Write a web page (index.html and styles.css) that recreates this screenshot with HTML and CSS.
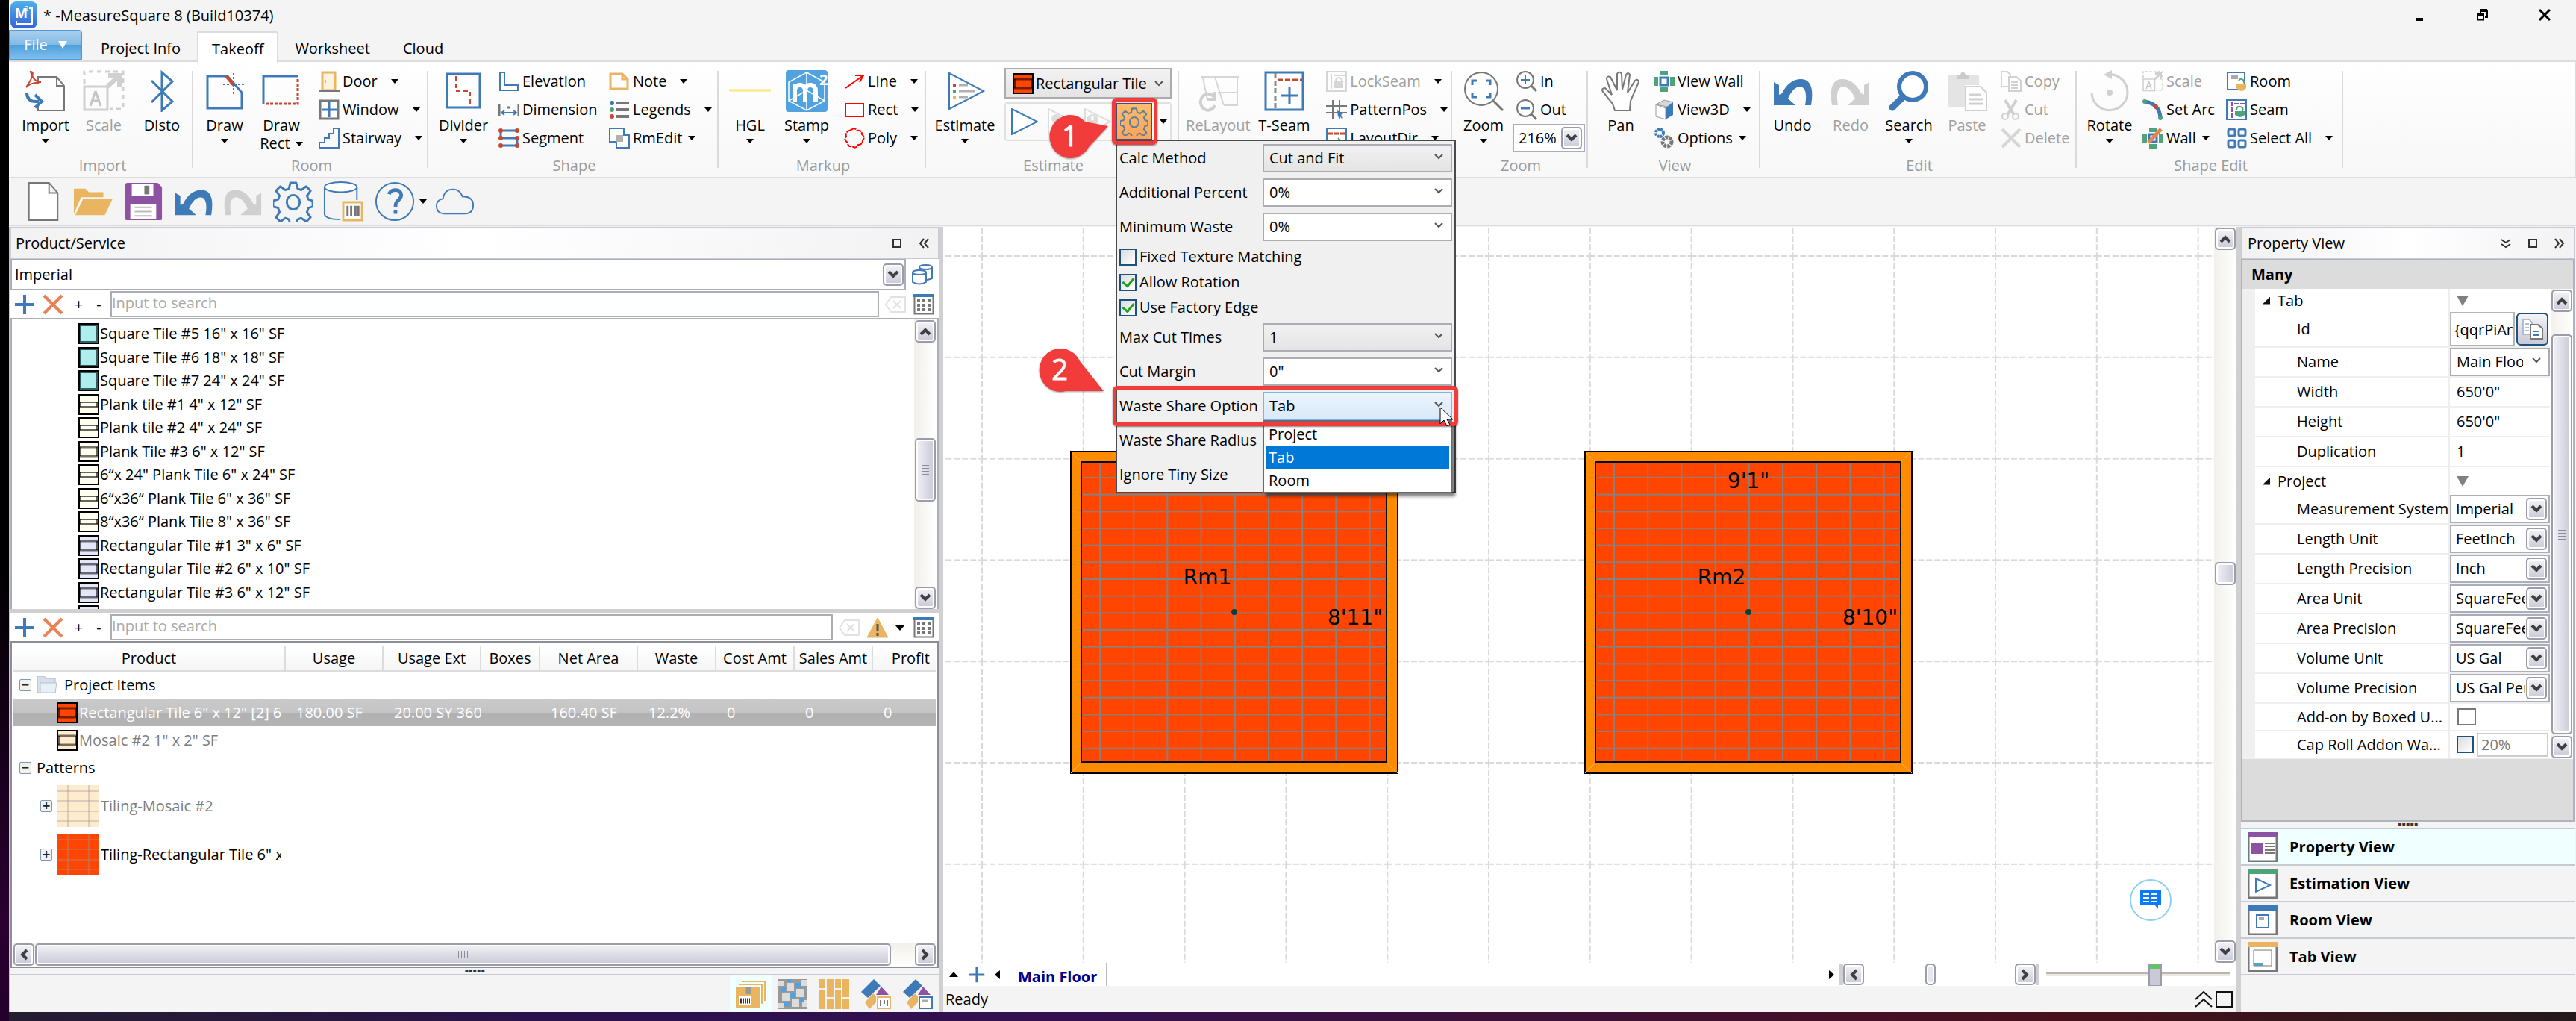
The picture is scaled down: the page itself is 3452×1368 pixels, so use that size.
FILE: index.html
```html
<!DOCTYPE html>
<html lang="en">
<head>
<meta charset="utf-8">
<title>* -MeasureSquare 8 (Build10374)</title>
<link rel="stylesheet" href="styles.css">
</head>
<body>
<svg class="defs" aria-hidden="true">
  <symbol id="chev" viewBox="0 0 16 12"><path d="M2 2l6 6 6-6" fill="none" stroke="#404040" stroke-width="4"/></symbol>
  <symbol id="thin" viewBox="0 0 12 10"><path d="M1 2l5 5 5-5" fill="none" stroke="#555" stroke-width="2"/></symbol>
  <symbol id="plus" viewBox="0 0 28 28"><path d="M14 1v26M1 14h26" stroke="#3e7ab8" stroke-width="4"/></symbol>
  <symbol id="cross" viewBox="0 0 28 28"><path d="M2 2l24 24M26 2L2 26" stroke="#e88355" stroke-width="4"/></symbol>
  <symbol id="grid" viewBox="0 0 28 28"><path d="M1.500 3v23.500h25V3" fill="#fff" stroke="#777" stroke-width="2"/><path d="M0 2h28" stroke="#3e7ab8" stroke-width="4"/><path d="M5 9h18M5 15h18M5 21h18" stroke="#777" stroke-width="4" stroke-dasharray="4 3"/></symbol>
  <symbol id="clear" viewBox="0 0 28 28"><path d="M1 14L8 4h19v20H8zM11 9l10 10M21 9L11 19" fill="none" stroke="#e2e2e2" stroke-width="2"/></symbol>
  <symbol id="gear" viewBox="0 0 56 56"><path d="M24 2h8l2 8 5 2 7-5 6 6-5 7 2 5 6 2v8l-6 2-2 6 5 7-6 6-7-5-5 2-2 7h-8l-2-7-5-2-7 5-6-6 5-7-2-6-7-2v-8l7-2 2-5-5-7 6-6 7 5 5-2z" fill="none" stroke="currentColor" stroke-width="3" stroke-linejoin="round"/><ellipse cx="28" cy="29" rx="9" ry="10" fill="none" stroke="currentColor" stroke-width="3"/></symbol>
  <symbol id="undo" viewBox="0 0 56 56"><path d="M3 16v31h29L22 38Q29 22 39 22q10 2 6 25h8Q59 11 38 12 23 13 14 31l-4 2V20z" fill="currentColor"/></symbol>
  <symbol id="redo" viewBox="0 0 56 56"><path d="M53 16v31H24l10-9Q27 22 17 22q-10 2-6 25H3Q-3 11 18 12q15 1 24 19l4 2V20z" fill="currentColor"/></symbol>
  <symbol id="scaleBig" viewBox="0 0 56 56"><path d="M2 18V2h52v50H36" fill="none" stroke="#d0d0d0" stroke-width="3" stroke-dasharray="6 5"/><path d="M2 22h31v31H2z" fill="none" stroke="#d0d0d0" stroke-width="3"/><path d="M33 22L48 8M34 7h15v16" fill="none" stroke="#d0d0d0" stroke-width="6"/><path d="M17 28l-7 20M17 28l7 20M12 41h11" fill="none" stroke="#c6c6c6" stroke-width="3"/></symbol>
  <symbol id="swBand" viewBox="0 0 28 28"><rect x="1" y="1" width="26" height="26" fill="currentColor" stroke="#000" stroke-width="2"/><path d="M2 8h24M2 20h24" stroke="#000" stroke-opacity=".55" stroke-width="3"/><path d="M3 8v12M25 8v12" stroke="#000" stroke-opacity=".6" stroke-width="2"/></symbol>
  <symbol id="swThin" viewBox="0 0 28 28"><rect x="1" y="1" width="26" height="26" fill="currentColor" stroke="#000" stroke-width="2"/><path d="M2 11h24M2 17h24" stroke="#000" stroke-opacity=".6" stroke-width="2"/><path d="M3 11v6M25 11v6" stroke="#000" stroke-opacity=".6" stroke-width="2"/></symbol>
  <symbol id="swSq" viewBox="0 0 28 28"><rect x="1" y="1" width="26" height="26" fill="currentColor" stroke="#000" stroke-width="2"/><rect x="3" y="3" width="22" height="22" fill="none" stroke="#2f5f5f" stroke-width="2"/></symbol>
  <symbol id="wall" viewBox="0 0 28 28"><path d="M9 0h10v6H9zM9 22h10v6H9zM0 8h6v12H0zM22 8h6v12h-6z" fill="#4ea27c"/><rect x="9" y="9" width="10" height="10" fill="#fff" stroke="#3e7ab8" stroke-width="3"/></symbol>
</svg>

<div class="app">
  <header class="titlebar">
    <svg class="logo" viewBox="0 0 36 36"><defs><linearGradient id="lg" x2="0" y2="1"><stop stop-color="#4fb0ea"/><stop offset="1" stop-color="#3463dc"/></linearGradient></defs><rect width="36" height="36" rx="8" fill="url(#lg)"/><path d="M8 26v4h21V9h-4" fill="none" stroke="#fff" stroke-width="2"/><text x="6" y="22" class="logo-m">M</text><text x="19" y="13" class="logo-2">2</text></svg>
    <h1>* -MeasureSquare 8 (Build10374)</h1>
    <div class="winbtns">
      <button aria-label="Minimize"><svg viewBox="0 0 20 20"><path d="M5 16h10" stroke="#000" stroke-width="4"/></svg></button>
      <button aria-label="Restore"><svg viewBox="0 0 20 20"><path d="M8 7V4h9v9h-3M4 8.500h8v8H4z" fill="none" stroke="#000" stroke-width="2"/><path d="M7 4h10M3 9h10" stroke="#000" stroke-width="4"/></svg></button>
      <button aria-label="Close"><svg viewBox="0 0 20 20"><path d="M3 3l14 14M17 3L3 17" stroke="#000" stroke-width="3"/></svg></button>
    </div>
  </header>

  <nav class="tabs">
    <button class="file">File <svg viewBox="0 0 12 10"><path d="M0 0h12L6 10z" fill="#fff"/></svg></button>
    <button class="tab">Project Info</button>
    <button class="tab active">Takeoff</button>
    <button class="tab">Worksheet</button>
    <button class="tab">Cloud</button>
  </nav>

  <section class="ribbon">
    <div class="group g-import"><div class="tools">
      <button class="big"><svg viewBox="0 0 56 56"><path d="M18 18V9h25l10 12v33H18v-9M43 9v12h10" fill="none" stroke="#777" stroke-width="2"/><path d="M8 2c6 0 2 9-6 21 4-4 8-6 20-7-8 0-13-8-14-14z" fill="none" stroke="#c9472e" stroke-width="2"/><path d="M3 30q0 12 12 12h4M14 33l9 9-9 8" fill="none" stroke="#3e7ab8" stroke-width="4"/></svg><span>Import</span><i class="dd"></i></button>
      <button class="big off"><svg><use href="#scaleBig"/></svg><span>Scale</span></button>
      <button class="big"><svg viewBox="0 0 56 56"><path d="M14 14l28 28-14 12V3l14 12-28 28" fill="none" stroke="#3e7ab8" stroke-width="3"/></svg><span>Disto</span></button>
    </div><h2>Import</h2></div>

    <div class="group g-room"><div class="tools">
      <button class="big"><svg viewBox="0 0 56 56"><path d="M32 8H5v43h46V30z" fill="none" stroke="#3e7ab8" stroke-width="3"/><path d="M40 4v30M26 19h30" stroke="#3e7ab8" stroke-width="2" stroke-dasharray="3 2"/><path d="M30 8l10 12" stroke="#c9472e" stroke-width="4"/></svg><span>Draw</span><i class="dd"></i></button>
      <button class="big"><svg viewBox="0 0 56 56"><path d="M4 46V8h47" fill="none" stroke="#3e7ab8" stroke-width="3"/><path d="M50 12v33H6" fill="none" stroke="#c9472e" stroke-width="3" stroke-dasharray="4 2"/></svg><span>Draw</span><span>Rect <i class="dd in"></i></span></button>
      <div class="col">
        <button class="small wide"><svg viewBox="0 0 28 28"><path d="M5 2h17v24H5z" fill="#fdf3e0" stroke="#eab561" stroke-width="3"/><path d="M9 12v4" stroke="#eab561" stroke-width="2"/><path d="M0 27h28" stroke="#777" stroke-width="3"/></svg>Door<i class="dd"></i></button>
        <button class="small wide"><svg viewBox="0 0 28 28"><path d="M2 2h24v24H2z" fill="#fff" stroke="#777" stroke-width="3"/><path d="M14 4v20M4 14h20" stroke="#3e7ab8" stroke-width="3"/></svg>Window<i class="dd"></i></button>
        <button class="small wide"><svg viewBox="0 0 28 28"><path d="M1 27v-7h7v-6h6V8h6V1h7v26z" fill="none" stroke="#3e7ab8" stroke-width="2"/></svg>Stairway<i class="dd"></i></button>
      </div>
    </div><h2>Room</h2></div>

    <div class="group g-shape"><div class="tools">
      <button class="big"><svg viewBox="0 0 56 56"><path d="M6 5h44v45H6z" fill="#fff" stroke="#3e7ab8" stroke-width="3"/><path d="M18 8v20h19v20" fill="none" stroke="#c9472e" stroke-width="2" stroke-dasharray="6 4"/></svg><span>Divider</span><i class="dd"></i></button>
      <div class="col">
        <button class="small"><svg viewBox="0 0 28 28"><path d="M2 2h6v17h18v7H2z" fill="#fff" stroke="#3e7ab8" stroke-width="2"/></svg>Elevation</button>
        <button class="small"><svg viewBox="0 0 28 28"><path d="M1 6v16M27 6v16M11 11h5" stroke="#777" stroke-width="3"/><path d="M4 18h20M8 15l-4 3 4 3M20 15l4 3-4 3" fill="none" stroke="#3e7ab8" stroke-width="2"/></svg>Dimension</button>
        <button class="small"><svg viewBox="0 0 28 28"><path d="M25 4H3v10h22v10H3" fill="none" stroke="#3e7ab8" stroke-width="3"/><g fill="#c9472e"><circle cx="3" cy="4" r="3"/><circle cx="25" cy="4" r="3"/><circle cx="3" cy="14" r="3"/><circle cx="25" cy="14" r="3"/><circle cx="3" cy="24" r="3"/><circle cx="25" cy="24" r="3"/></g></svg>Segment</button>
      </div>
      <div class="col">
        <button class="small wide"><svg viewBox="0 0 28 28"><path d="M2 4h16l7 7v13H2zM18 4v7h7" fill="#fff" stroke="#eab561" stroke-width="3"/></svg>Note<i class="dd"></i></button>
        <button class="small wide"><svg viewBox="0 0 28 28"><circle cx="4" cy="5" r="3" fill="#3e7ab8"/><circle cx="4" cy="14" r="3" fill="#4ea27c"/><circle cx="4" cy="23" r="3" fill="#c9472e"/><path d="M9 5h18M9 14h18M9 23h18" stroke="#777" stroke-width="4"/></svg>Legends<i class="dd"></i></button>
        <button class="small"><svg viewBox="0 0 28 28"><path d="M1 1h19v9h7v17H10v-8H1z" fill="#fff" stroke="#3e7ab8" stroke-width="2"/><path d="M10 10h9v9h-9z" fill="#b0b0b0"/></svg>RmEdit<i class="dd"></i></button>
      </div>
    </div><h2>Shape</h2></div>

    <div class="group g-markup"><div class="tools">
      <button class="big"><svg viewBox="0 0 56 56"><path d="M0 27h56" stroke="#ffe678" stroke-width="3"/></svg><span>HGL</span><i class="dd"></i></button>
      <button class="big"><svg viewBox="0 0 56 56"><rect width="56" height="56" rx="4" fill="#51a2df"/><path d="M28 3l24 13v25L28 54 4 41V16zM4 41l24-14 24 14M28 3v50" fill="none" stroke="#fff" stroke-width="1.500"/><path d="M12 42V18M12 27q1-8 8-7 6 1 6 8v14M26 27q1-8 8-7 6 1 6 8v14" fill="none" stroke="#fff" stroke-width="6"/><text x="45" y="20" class="stamp2">2</text></svg><span>Stamp</span><i class="dd"></i></button>
      <div class="col">
        <button class="small wide"><svg viewBox="0 0 28 28"><path d="M2 23L26 6M15 6h11l-5 9" fill="none" stroke="red" stroke-width="2"/></svg>Line<i class="dd"></i></button>
        <button class="small wide"><svg viewBox="0 0 28 28"><path d="M2 6h24v17H2z" fill="none" stroke="red" stroke-width="2"/></svg>Rect<i class="dd"></i></button>
        <button class="small wide"><svg viewBox="0 0 28 28"><path d="M10 3q4-4 8 1 6-1 6 5 5 4 1 8 0 6-6 6-3 6-8 2-6 1-6-5-6-4-2-8-2-7 7-9z" fill="none" stroke="red" stroke-width="2" stroke-dasharray="7 1"/></svg>Poly<i class="dd"></i></button>
      </div>
    </div><h2>Markup</h2></div>

    <div class="group g-est"><div class="tools">
      <button class="big"><svg viewBox="0 0 56 56"><path d="M7 4v48l46-24z" fill="#fff" stroke="#3e7ab8" stroke-width="2"/><path d="M20 20h12M20 28h22M20 36h12" stroke="#b0b0b0" stroke-width="3"/><path d="M12 20h4" stroke="#c9472e" stroke-width="4"/><path d="M12 28h4" stroke="#4ea27c" stroke-width="4"/><path d="M12 36h4" stroke="#eab561" stroke-width="4"/></svg><span>Estimate</span><i class="dd"></i></button>
      <div class="stack">
        <button class="tilepick"><svg class="sw red"><use href="#swBand"/></svg><span>Rectangular Tile</span><svg class="thin"><use href="#thin"/></svg></button>
        <div class="runbox">
          <button aria-label="Run"><svg viewBox="0 0 36 36"><path d="M1 1v34l34-17z" fill="#fff" stroke="#3e7ab8" stroke-width="2"/></svg></button>
          <button aria-label="Run selected"><svg viewBox="0 0 36 36"><path d="M1 1v34l34-17z" fill="#fff" stroke="#ddd" stroke-width="2"/><circle cx="11" cy="14" r="6" fill="#ddd"/></svg></button>
          <button aria-label="Stop"><svg viewBox="0 0 36 36"><path d="M1 1v34l34-17z" fill="#fff" stroke="#ddd" stroke-width="2"/><circle cx="11" cy="16" r="8" fill="#ddd"/><path d="M11 11v5" stroke="#fff" stroke-width="3"/></svg></button>
          <div class="settings">
            <button class="gearbtn" aria-label="Settings"><svg><use href="#gear"/></svg></button>
            <form class="popup">
              <div class="prow"><label for="calc">Calc Method</label><span class="combo grey"><select id="calc"><option>Cut and Fit</option></select><svg class="thin"><use href="#thin"/></svg></span></div>
              <div class="prow"><label for="addp">Additional Percent</label><span class="combo"><select id="addp"><option>0%</option></select><svg class="thin"><use href="#thin"/></svg></span></div>
              <div class="prow"><label for="minw">Minimum Waste</label><span class="combo"><select id="minw"><option>0%</option></select><svg class="thin"><use href="#thin"/></svg></span></div>
              <label class="check"><input type="checkbox">Fixed Texture Matching</label>
              <label class="check"><input type="checkbox" checked>Allow Rotation</label>
              <label class="check"><input type="checkbox" checked>Use Factory Edge</label>
              <div class="prow"><label for="maxc">Max Cut Times</label><span class="combo grey"><select id="maxc"><option>1</option></select><svg class="thin"><use href="#thin"/></svg></span></div>
              <div class="prow"><label for="cutm">Cut Margin</label><span class="combo"><select id="cutm"><option>0"</option></select><svg class="thin"><use href="#thin"/></svg></span></div>
              <div class="prow"><label for="wso">Waste Share Option</label><span class="combo hot"><select id="wso"><option>Tab</option></select><svg class="thin"><use href="#thin"/></svg>
                <ul class="list" role="listbox"><li role="option">Project</li><li role="option" aria-selected="true" class="sel">Tab</li><li role="option">Room</li></ul></span></div>
              <div class="prow"><label>Waste Share Radius</label></div>
              <div class="prow"><label>Ignore Tiny Size</label></div>
            </form>
            <div class="frame f1"></div>
            <div class="frame f2"></div>
            <svg class="marker m1" viewBox="0 0 80 60"><path d="M29 1a28 29 0 1 0 25 43L80 16 49 10A28 29 0 0 0 29 1z" fill="#f23c3c"/><text x="29" y="43">1</text></svg>
            <svg class="marker m2" viewBox="0 0 92 60"><path d="M29 1a28 29 0 1 0 8 57H88L56 18A28 29 0 0 0 29 1z" fill="#f23c3c"/><text x="29" y="43">2</text></svg>
            <svg class="cursor" viewBox="0 0 20 26"><path d="M1 1v22l5-5 4 8 4-2-4-7h8z" fill="#fff" stroke="#000"/></svg>
          </div>
          <i class="dd"></i>
        </div>
      </div>
    </div><h2>Estimate</h2></div>

    <div class="group g-layout"><div class="tools">
      <button class="big off"><svg viewBox="0 0 56 56"><path d="M6 9h50M24 9l12 38M36 47h18V9M28 30h26M8 10l6 30" fill="none" stroke="#d6d6d6" stroke-width="2"/><path d="M22 35a10 11 0 1 0 2 12M24 29v10H14" fill="none" stroke="#d0d0d0" stroke-width="4"/></svg><span>ReLayout</span></button>
      <button class="big"><svg viewBox="0 0 56 56"><path d="M3 3h50v50H3z" fill="#fff" stroke="#3e7ab8" stroke-width="3"/><path d="M16 4v48" stroke="#888" stroke-width="3" stroke-dasharray="7 3"/><path d="M19 13h33" stroke="#c9472e" stroke-width="3" stroke-dasharray="7 3"/><path d="M35 22v24M23 34h24" stroke="#3e7ab8" stroke-width="3"/></svg><span>T-Seam</span></button>
      <div class="col">
        <button class="small off wide"><svg viewBox="0 0 28 28"><path d="M1 1h26v26H1zM7 4v20M11 6h14" fill="none" stroke="#d6d6d6" stroke-width="2"/><path d="M11 14h12v9H11z" fill="#d6d6d6"/><path d="M13 14q0-5 4-5t4 5" fill="none" stroke="#d6d6d6" stroke-width="2"/></svg>LockSeam<i class="dd"></i></button>
        <button class="small wide"><svg viewBox="0 0 28 28"><path d="M9 1v26M18 1v26M0 9h28M0 18h28" stroke="#777" stroke-width="2"/><path d="M15 15l8 4-3 2 3 4-2 1-3-4-2 2z" fill="#3e7ab8"/></svg>PatternPos<i class="dd"></i></button>
        <button class="small wide"><svg viewBox="0 0 28 28"><path d="M1 1h26v26H1z" fill="#fff" stroke="#3e7ab8" stroke-width="2"/><path d="M3 8h22" stroke="#c9472e" stroke-width="3" stroke-dasharray="6 2"/><path d="M16 14l3 3-3 3" stroke="#4ea27c" fill="none" stroke-width="2"/></svg>LayoutDir<i class="dd"></i></button>
      </div>
    </div></div>

    <div class="group g-zoom"><div class="tools">
      <button class="big"><svg viewBox="0 0 56 56"><circle cx="25" cy="25" r="22" fill="#fff" stroke="#777" stroke-width="2"/><path d="M41 41l13 13" stroke="#777" stroke-width="3"/><path d="M13 20v-6h6M31 14h6v6M37 30v6h-6M19 36h-6v-6" fill="none" stroke="#3e7ab8" stroke-width="3"/></svg><span>Zoom</span><i class="dd"></i></button>
      <div class="col tight">
        <button class="small"><svg viewBox="0 0 28 28"><circle cx="12" cy="12" r="11" fill="#fff" stroke="#777" stroke-width="2"/><path d="M20 20l7 7" stroke="#777" stroke-width="3"/><path d="M12 6v12M6 12h12" stroke="#3e7ab8" stroke-width="2"/></svg>In</button>
        <button class="small"><svg viewBox="0 0 28 28"><circle cx="12" cy="12" r="11" fill="#fff" stroke="#777" stroke-width="2"/><path d="M20 20l7 7" stroke="#777" stroke-width="3"/><path d="M6 12h12" stroke="#3e7ab8" stroke-width="3"/></svg>Out</button>
        <span class="xcombo zoomsel"><select aria-label="Zoom level"><option>216%</option></select><b class="xb"><svg><use href="#chev"/></svg></b></span>
      </div>
    </div><h2>Zoom</h2></div>

    <div class="group g-view"><div class="tools">
      <button class="big"><svg viewBox="0 0 56 56"><path d="M20 54l-3-9L4 29q-3-5 3-5l9 9L9 12q0-5 5-3l9 18V5q3-5 6 0l1 21 5-20q3-4 5 0l-3 24 10-16q4-3 5 2L41 41l-1 13z" fill="#fff" stroke="#777" stroke-width="2"/></svg><span>Pan</span></button>
      <div class="col tight">
        <button class="small"><svg><use href="#wall"/></svg>View Wall</button>
        <button class="small wide"><svg viewBox="0 0 28 28"><path d="M3 7l11-6 12 3-8 6z" fill="#d5d9dc" stroke="#999"/><path d="M3 7l13 5v15L3 23z" fill="#fff" stroke="#999"/><path d="M16 12l10-8v17l-10 6z" fill="#3e7ab8"/></svg>View3D<i class="dd"></i></button>
        <button class="small"><svg viewBox="0 0 28 28"><circle cx="8" cy="7" r="5" fill="none" stroke="#3e7ab8" stroke-width="4" stroke-dasharray="3 1"/><circle cx="18" cy="19" r="6" fill="none" stroke="#777" stroke-width="5" stroke-dasharray="4 1"/></svg>Options<i class="dd"></i></button>
      </div>
    </div><h2>View</h2></div>

    <div class="group g-edit"><div class="tools">
      <button class="big blue"><svg><use href="#undo"/></svg><span>Undo</span></button>
      <button class="big off grey"><svg><use href="#redo"/></svg><span>Redo</span></button>
      <button class="big"><svg viewBox="0 0 56 56"><circle cx="33" cy="22" r="18" fill="#fff" stroke="#3e7ab8" stroke-width="6"/><path d="M20 36L6 50" stroke="#3e7ab8" stroke-width="9" stroke-linecap="round"/></svg><span>Search</span><i class="dd"></i></button>
      <button class="big off"><svg viewBox="0 0 56 56"><path d="M2 6h42v14H25v30H2z" fill="#e4e4e4"/><path d="M14 6h5q3-8 7 0h5v6H14z" fill="#ccc"/><path d="M26 22h20l8 8v24H26z" fill="#fff" stroke="#d0d0d0" stroke-width="2"/><path d="M31 33h16M31 39h18M31 45h18" stroke="#d0d0d0" stroke-width="3"/></svg><span>Paste</span></button>
      <div class="col tight">
        <button class="small off"><svg viewBox="0 0 28 28"><path d="M1 1h8l4 4v16H1z" fill="none" stroke="#d6d6d6" stroke-width="2"/><path d="M11 8h10l6 5v14H11zM14 15h9M14 19h9M14 23h9" fill="#fff" stroke="#d0d0d0" stroke-width="2"/></svg>Copy</button>
        <button class="small off"><svg viewBox="0 0 28 28"><path d="M6 1l12 20M21 1L9 21" stroke="#d0d0d0" stroke-width="4"/><circle cx="6" cy="23" r="4" fill="none" stroke="#d0d0d0" stroke-width="2"/><circle cx="20" cy="23" r="4" fill="none" stroke="#d0d0d0" stroke-width="2"/></svg>Cut</button>
        <button class="small off"><svg viewBox="0 0 28 28"><path d="M2 2l24 24M26 2L2 26" stroke="#d6d6d6" stroke-width="4"/></svg>Delete</button>
      </div>
    </div><h2>Edit</h2></div>

    <div class="group g-sedit"><div class="tools">
      <button class="big"><svg viewBox="0 0 56 56"><path d="M4 30a24 24 0 1 0 20-24" fill="none" stroke="#d0d0d0" stroke-width="3"/><path d="M20 6L31 0v12z" fill="#d0d0d0"/><circle cx="28" cy="30" r="4" fill="#d0d0d0"/></svg><span>Rotate</span><i class="dd"></i></button>
      <div class="col tight c112">
        <button class="small off"><svg><use href="#scaleBig"/></svg>Scale</button>
        <button class="small"><svg viewBox="0 0 28 28"><path d="M3 3Q23 6 24 25" fill="none" stroke="#3e7ab8" stroke-width="5"/><g fill="#4ea27c"><circle cx="3" cy="3" r="3"/><circle cx="24" cy="25" r="3"/></g><circle cx="18" cy="10" r="3" fill="#c9472e"/></svg>Set Arc</button>
        <button class="small"><svg viewBox="0 0 28 28"><use href="#wall"/><path d="M8 20L25 2" stroke="#e88355" stroke-width="5"/></svg>Wall<i class="dd"></i></button>
      </div>
      <div class="col tight">
        <button class="small"><svg viewBox="0 0 28 28"><path d="M2 2h23v23H2z" fill="#fff" stroke="#3e7ab8" stroke-width="2"/><path d="M7 6h9v5H7z" fill="#aaa"/><path d="M17 14q1-5 6-2l2 6" fill="none" stroke="#4ea27c" stroke-width="2"/><path d="M14 18h13v5q-6 8-13 0z" fill="#eab561"/></svg>Room</button>
        <button class="small"><svg viewBox="0 0 28 28"><path d="M1 1h26v26H1z" fill="#fff" stroke="#3e7ab8" stroke-width="2"/><path d="M8 3v22M11 6h14" stroke="#8d52a1" stroke-width="2" stroke-dasharray="6 2"/><path d="M14 15q0-6 5-5t3 6" fill="none" stroke="#4ea27c" stroke-width="2"/><path d="M12 16h13v5q-6 6-13 0z" fill="#4ea27c"/></svg>Seam</button>
        <button class="small wide"><svg viewBox="0 0 28 28"><g fill="#fff" stroke="#3e7ab8" stroke-width="3"><rect x="3" y="2" width="9" height="9" rx="2"/><rect x="17" y="2" width="9" height="9" rx="2"/><rect x="3" y="17" width="9" height="9" rx="2"/><rect x="17" y="17" width="9" height="9" rx="2"/></g></svg>Select All<i class="dd"></i></button>
      </div>
    </div><h2>Shape Edit</h2></div>
  </section>

  <div class="quick">
    <button aria-label="New"><svg viewBox="0 0 56 56"><path d="M8 2h28l12 14v38H8zM36 2v14h12" fill="#fff" stroke="#777" stroke-width="2"/></svg></button>
    <button aria-label="Open"><svg viewBox="0 0 56 56"><path d="M1 45V10h16l5 5h20v7H11z" fill="#eab561"/><path d="M14 24h41L44 47H3z" fill="#eab561"/></svg></button>
    <button aria-label="Save"><svg viewBox="0 0 56 56"><path d="M6 2h42l6 6v44q0 2-2 2H5q-2 0-2-2V5q0-3 3-3z" fill="#8d52a1"/><path d="M12 4h30v16H12zM10 31h36v21H10z" fill="#fff"/><path d="M33 6v12" stroke="#777" stroke-width="7"/><path d="M16 36h24M16 42h24M16 48h24" stroke="#bbb" stroke-width="2"/></svg></button>
    <button aria-label="Undo" class="blue"><svg><use href="#undo"/></svg></button>
    <button aria-label="Redo" class="grey"><svg><use href="#redo"/></svg></button>
    <button aria-label="Settings" class="blue"><svg><use href="#gear"/></svg></button>
    <button aria-label="Database"><svg viewBox="0 0 56 56"><path d="M2 8v38q2 7 22 7M47 8v18" fill="none" stroke="#3e7ab8" stroke-width="2"/><ellipse cx="24.500" cy="8" rx="22.500" ry="7" fill="#fff" stroke="#3e7ab8" stroke-width="2"/><path d="M28 29h26v25H28z" fill="#fff" stroke="#eab561" stroke-width="3"/><path d="M34 34v14M39 34v14M45 34v14M49 34v14" stroke="#777" stroke-width="3"/></svg></button>
    <button aria-label="Help" class="help"><svg viewBox="0 0 56 56"><circle cx="28" cy="28" r="26" fill="none" stroke="#3e7ab8" stroke-width="2"/><path d="M20 18q2-6 9-6t8 7q0 4-5 8-3 3-3 9M29 40v5" fill="none" stroke="#3e7ab8" stroke-width="5"/></svg></button>
    <i class="dd"></i>
    <button aria-label="Cloud"><svg viewBox="0 0 56 56"><path d="M12 45q-10-1-10-11 0-8 9-10 2-13 14-13 9 0 13 10 15 0 15 12 0 12-12 12z" fill="none" stroke="#3e7ab8" stroke-width="2"/></svg></button>
  </div>

  <main class="work">
    <section class="left">
      <div class="phead"><h3>Product/Service</h3><svg class="hi" viewBox="0 0 14 14"><path d="M2 2h10v10H2z" fill="none" stroke="#333" stroke-width="2"/></svg><svg class="hi" viewBox="0 0 14 14"><path d="M7 1L2 7l5 6M13 1L8 7l5 6" fill="none" stroke="#333" stroke-width="2"/></svg></div>
      <div class="catalog"><span class="xcombo"><select aria-label="Catalog"><option>Imperial</option></select><b class="xb"><svg><use href="#chev"/></svg></b></span><button class="ib" aria-label="Databases"><svg viewBox="0 0 28 28"><g fill="#fff" stroke="#3e7ab8" stroke-width="2"><path d="M10 4v16q8 3 17-1V4"/><ellipse cx="18.500" cy="4" rx="8.500" ry="3"/><path d="M1 11v13q9 5 18 0V11"/><ellipse cx="10" cy="11" rx="9" ry="3"/></g></svg></button></div>
      <div class="tbar"><button class="ib" aria-label="Add"><svg><use href="#plus"/></svg></button><button class="ib" aria-label="Delete"><svg><use href="#cross"/></svg></button><button class="tx">+</button><button class="tx">-</button><input type="text" placeholder="Input to search" aria-label="Search products"><button class="ib" aria-label="Clear"><svg><use href="#clear"/></svg></button><button class="ib" aria-label="Grid"><svg><use href="#grid"/></svg></button></div>
      <div class="treebox">
        <ul class="tree">
          <li><svg class="sw aqua"><use href="#swSq"/></svg>Square Tile #5 16" x 16" SF</li>
          <li><svg class="sw aqua"><use href="#swSq"/></svg>Square Tile #6 18" x 18" SF</li>
          <li><svg class="sw aqua"><use href="#swSq"/></svg>Square Tile #7 24" x 24" SF</li>
          <li><svg class="sw ivory"><use href="#swThin"/></svg>Plank tile #1 4" x 12" SF</li>
          <li><svg class="sw ivory"><use href="#swThin"/></svg>Plank tile #2 4" x 24" SF</li>
          <li><svg class="sw ivory"><use href="#swBand"/></svg>Plank Tile #3 6" x 12" SF</li>
          <li><svg class="sw ivory"><use href="#swThin"/></svg>6“x 24" Plank Tile 6" x 24" SF</li>
          <li><svg class="sw ivory"><use href="#swThin"/></svg>6“x36“ Plank Tile 6" x 36" SF</li>
          <li><svg class="sw ivory"><use href="#swThin"/></svg>8“x36“ Plank Tile 8" x 36" SF</li>
          <li><svg class="sw lav"><use href="#swBand"/></svg>Rectangular Tile #1 3" x 6" SF</li>
          <li><svg class="sw lav"><use href="#swBand"/></svg>Rectangular Tile #2 6" x 10" SF</li>
          <li><svg class="sw lav"><use href="#swBand"/></svg>Rectangular Tile #3 6" x 12" SF</li>
          <li><svg class="sw lav"><use href="#swBand"/></svg></li>
        </ul>
        <div class="vsb"><b class="xb up"><svg><use href="#chev"/></svg></b><div class="track t-tree"><b class="thumb"></b></div><b class="xb"><svg><use href="#chev"/></svg></b></div>
      </div>
      <div class="hsplit"></div>
      <div class="tbar"><button class="ib" aria-label="Add"><svg><use href="#plus"/></svg></button><button class="ib" aria-label="Delete"><svg><use href="#cross"/></svg></button><button class="tx">+</button><button class="tx">-</button><input type="text" placeholder="Input to search" aria-label="Search items"><button class="ib" aria-label="Clear"><svg><use href="#clear"/></svg></button><button class="ib warn" aria-label="Warnings"><svg viewBox="0 0 28 28"><path d="M14 1l14 26H0z" fill="#eab561" stroke="#eab561" stroke-linejoin="round"/><path d="M14 9v10M14 21v4" stroke="#555" stroke-width="3"/></svg><i class="dd"></i></button><button class="ib" aria-label="Grid"><svg><use href="#grid"/></svg></button></div>
      <div class="tablebox">
        <table>
          <colgroup><col class="c1"><col class="c2"><col class="c2"><col class="c3"><col class="c2"><col class="c4"><col class="c4"><col class="c4"><col></colgroup>
          <thead><tr><th>Product</th><th>Usage</th><th>Usage Ext</th><th>Boxes</th><th>Net Area</th><th>Waste</th><th>Cost Amt</th><th>Sales Amt</th><th class="r">Profit</th></tr></thead>
          <tbody>
            <tr><td colspan="9"><div class="cell l0"><i class="ex">−</i><svg class="fold" viewBox="0 0 28 24"><path d="M1 22V2q0-2 2-2h7l3 3h12v19z" fill="#d5e0ea" stroke="#aab8c4"/><path d="M5 22V9h22l-2 13z" fill="#eaf1f6" stroke="#b4c2ce"/></svg>Project Items</div></td></tr>
            <tr class="selrow"><td><div class="cell l1"><svg class="sw red"><use href="#swBand"/></svg><span class="clip">Rectangular Tile 6" x 12" [2] 6</span></div></td><td>180.00 SF</td><td>20.00 SY 360</td><td></td><td>160.40 SF</td><td>12.2%</td><td>0</td><td>0</td><td>0</td></tr>
            <tr class="dim"><td><div class="cell l1"><svg class="sw cream"><use href="#swBand"/></svg>Mosaic #2 1" x 2" SF</div></td><td colspan="8"></td></tr>
            <tr><td colspan="9"><div class="cell l0"><i class="ex">−</i>Patterns</div></td></tr>
            <tr class="tall dim"><td><div class="cell l2"><i class="ex">+</i><svg class="pat cream" viewBox="0 0 56 56"><path d="M0 0h56v56H0z" fill="currentColor"/><path d="M14 0v56M42 0v56M0 8h56M0 21h56M0 35h56M0 48h56" stroke="#999" stroke-opacity=".7"/></svg>Tiling-Mosaic #2</div></td><td colspan="8"></td></tr>
            <tr class="tall"><td><div class="cell l2"><i class="ex">+</i><svg class="pat red" viewBox="0 0 56 56"><path d="M0 0h56v56H0z" fill="currentColor"/><path d="M14 0v56M42 0v56M0 8h56M0 21h56M0 35h56M0 48h56" stroke="#999" stroke-opacity=".7"/></svg><span class="clip">Tiling-Rectangular Tile 6" x</span></div></td><td colspan="8"></td></tr>
          </tbody>
        </table>
        <div class="hsb"><b class="xb lt"><svg><use href="#chev"/></svg></b><div class="track h"><b class="thumb"></b></div><b class="xb rt"><svg><use href="#chev"/></svg></b></div>
      </div>
      <div class="grip">▪▪▪▪▪</div>
      <div class="footicons">
        <button class="on" aria-label="Products"><svg viewBox="0 0 40 40"><path d="M8 3h31v26M4 7h31v26" fill="none" stroke="#eab561" stroke-width="2"/><path d="M0 11h32v28H0z" fill="#eab561"/><path d="M17 11v9" stroke="#999" stroke-width="7"/><path d="M4 23h17v11H4z" fill="#fff"/><path d="M6 29h13" stroke="#333" stroke-width="7" stroke-dasharray="2 1"/></svg></button>
        <button aria-label="Patterns"><svg viewBox="0 0 40 40"><path d="M0 0h40v40H0z" fill="#999"/><path d="M1 2h8v7H1zM12 5h10v11H12zM32 1h7v8h-7zM25 13h10v11H25zM6 18h10v11H6zM19 26h10v11H19zM33 28h7v9h-7zM0 32h8v7H0z" fill="#dcdcdc"/><path d="M12 0h6v4h-6zM24 5h7v7h-7zM5 11h6v6H5zM17 18h6v7h-6zM9 30h8v6H9zM29 25h6v6h-6z" fill="#51a2df"/></svg></button>
        <button aria-label="Planks"><svg viewBox="0 0 40 40"><path d="M0 0h8v12H0zM0 14h8v26H0zM10 0h9v24h-9zM10 27h9v13h-9zM21 0h8v12h-8zM21 14h8v26h-8zM31 0h9v24h-9zM31 27h9v13h-9z" fill="#eab561"/></svg></button>
        <button aria-label="Shapes and products"><svg viewBox="0 0 40 40"><path d="M17 0l9 9L9 25 0 17z" fill="#3e7ab8"/><path d="M27 10l10 11H20z" fill="#8d52a1"/><path d="M5 31l11-12 4 4v8l-9 9z" fill="#eab561"/><path d="M22 24h17v15H22z" fill="#fff" stroke="#eab561" stroke-width="2"/><path d="M26 28v8M31 28v5M35 28v8" stroke="#777" stroke-width="2"/></svg></button>
        <button aria-label="Shapes and rooms"><svg viewBox="0 0 40 40"><path d="M17 0l9 9L9 25 0 17z" fill="#3e7ab8"/><path d="M27 10l10 11H20z" fill="#8d52a1"/><path d="M5 31l11-12 4 4v8l-9 9z" fill="#eab561"/><path d="M22 24h17v15H22z" fill="#fff" stroke="#3e7ab8" stroke-width="2"/><path d="M26 29h7" stroke="#aaa" stroke-width="3"/></svg></button>
      </div>
    </section>

    <section class="center">
      <div class="stage">
        <div class="plan">
          <svg class="planart">
            <defs>
              <pattern id="bg" x="51" y="38" width="135.800" height="135.800" patternUnits="userSpaceOnUse"><path d="M1 0v136M0 1h136" stroke="#d9d9d9" stroke-width="2" stroke-dasharray="8 3"/></pattern>
              <pattern id="tiles" x="24" y="20" width="45.200" height="22.670" patternUnits="userSpaceOnUse"><path d="M0 1h46M1 0v23" stroke="#8a7f7a" stroke-width="2"/></pattern>
              <g id="room"><rect x="1" y="1" width="438" height="431" fill="#ff8c00" stroke="#000" stroke-width="2"/><path d="M1 1l14 14M439 1l-15 14M1 432l14-14M439 432l-15-14" stroke="#ffb45a"/><g transform="translate(15 15)"><rect width="409" height="402" fill="#ff4500"/><rect width="409" height="402" fill="url(#tiles)" stroke="#000" stroke-width="2"/></g><circle cx="220" cy="216" r="4" fill="#0b3d3d"/></g>
            </defs>
            <rect width="100%" height="100%" fill="url(#bg)"/>
            <use href="#room" x="170" y="300"/><use href="#room" x="859" y="300"/>
            <g class="dims"><text x="354" y="479">Rm1</text><text x="552" y="533">8'11"</text><text x="1043" y="479">Rm2</text><text x="1242" y="533">8'10"</text><text x="1079" y="350">9'1"</text></g>
          </svg>
          <button class="chat" aria-label="Chat"><svg viewBox="0 0 28 26"><path d="M0 0h28v20h-4v5l-4-5H0z" fill="#0a7bff"/><path d="M4 5h20M4 10h20M4 15h20" stroke="#fff" stroke-width="2" stroke-dasharray="8 2"/></svg></button>
        </div>
        <div class="vsb"><b class="xb up"><svg><use href="#chev"/></svg></b><div class="track t-plan"><b class="thumb"></b></div><b class="xb"><svg><use href="#chev"/></svg></b></div>
      </div>
      <div class="floorbar"><i class="tri up"></i><button class="ib" aria-label="Add floor"><svg><use href="#plus"/></svg></button><i class="tri left"></i><a href="#main" class="floor">Main Floor</a><span class="sp"></span><i class="tri right"></i><div class="mini"><b class="xb lt"><svg><use href="#chev"/></svg></b><div class="track m"><b class="thumb"></b></div><b class="xb rt"><svg><use href="#chev"/></svg></b></div><input type="range" aria-label="Zoom" min="0" max="100" value="60"></div>
      <div class="status"><span>Ready</span><svg viewBox="0 0 52 22"><path d="M1 11L12 1l11 10M1 21l11-10 11 10M29 1h21v20H29z" fill="none" stroke="#111" stroke-width="2"/></svg></div>
    </section>

    <aside class="right">
      <div class="phead"><h3>Property View</h3><svg class="hi" viewBox="0 0 14 14"><path d="M1 2l6 4 6-4M1 8l6 4 6-4" fill="none" stroke="#333" stroke-width="2"/></svg><svg class="hi" viewBox="0 0 14 14"><path d="M2 2h10v10H2z" fill="none" stroke="#333" stroke-width="2"/></svg><svg class="hi" viewBox="0 0 14 14"><path d="M1 1l5 6-5 6M7 1l5 6-5 6" fill="none" stroke="#333" stroke-width="2"/></svg></div>
      <div class="propbox">
        <h4>Many</h4>
        <div class="props">
          <div class="gutter"></div>
          <div class="ptable">
            <div class="pr head h31"><span><i class="open"></i>Tab</span><span><i class="gtri"></i></span></div>
            <div class="pr h48"><label for="pid">Id</label><span><input id="pid" type="text" value="{qqrPiAmX"><button class="copy" aria-label="Copy"><svg viewBox="0 0 28 28"><path d="M1 1h8l4 4v16H1zM4 7h5M4 12h5M4 16h5" fill="#fff" stroke="#9ac" stroke-width="1.500"/><path d="M11 8h10l6 5v14H11z" fill="#fff" stroke="#777" stroke-width="2"/><path d="M14 17h9M14 22h9" stroke="#3e7ab8" stroke-width="2"/></svg></button></span></div>
            <div class="pr"><label for="pname">Name</label><span class="combo pname"><select id="pname"><option>Main Floor</option></select><svg class="thin"><use href="#thin"/></svg></span></div>
            <div class="pr"><span>Width</span><span class="v">650'0"</span></div>
            <div class="pr"><span>Height</span><span class="v">650'0"</span></div>
            <div class="pr"><span>Duplication</span><span class="v">1</span></div>
            <div class="pr head h37"><span><i class="open"></i>Project</span><span><i class="gtri"></i></span></div>
            <div class="pr"><label for="p1">Measurement System</label><span class="xcombo"><select id="p1"><option>Imperial</option></select><b class="xb"><svg><use href="#chev"/></svg></b></span></div>
            <div class="pr"><label for="p2">Length Unit</label><span class="xcombo"><select id="p2"><option>FeetInch</option></select><b class="xb"><svg><use href="#chev"/></svg></b></span></div>
            <div class="pr"><label for="p3">Length Precision</label><span class="xcombo"><select id="p3"><option>Inch</option></select><b class="xb"><svg><use href="#chev"/></svg></b></span></div>
            <div class="pr"><label for="p4">Area Unit</label><span class="xcombo"><select id="p4"><option>SquareFeet</option></select><b class="xb"><svg><use href="#chev"/></svg></b></span></div>
            <div class="pr"><label for="p5">Area Precision</label><span class="xcombo"><select id="p5"><option>SquareFeet</option></select><b class="xb"><svg><use href="#chev"/></svg></b></span></div>
            <div class="pr"><label for="p6">Volume Unit</label><span class="xcombo"><select id="p6"><option>US Gal</option></select><b class="xb"><svg><use href="#chev"/></svg></b></span></div>
            <div class="pr"><label for="p7">Volume Precision</label><span class="xcombo"><select id="p7"><option>US Gal Per</option></select><b class="xb"><svg><use href="#chev"/></svg></b></span></div>
            <div class="pr h37"><label for="p8">Add-on by Boxed U...</label><span><input id="p8" type="checkbox" class="plain"></span></div>
            <div class="pr h37"><label for="p9">Cap Roll Addon Wa...</label><span><input id="p9" type="checkbox"><input type="text" class="pct" value="20%" disabled aria-label="Cap percent"></span></div>
          </div>
          <div class="vsb"><b class="xb up"><svg><use href="#chev"/></svg></b><div class="track t-prop"><b class="thumb"></b></div><b class="xb"><svg><use href="#chev"/></svg></b></div>
        </div>
      </div>
      <div class="grip">▪▪▪▪▪</div>
      <nav class="views">
        <button class="on"><svg viewBox="0 0 40 40"><path d="M1 1h38v38H1z" fill="#fff" stroke="#777" stroke-width="3"/><path d="M0 0h40v7H0z" fill="#8d52a1"/><path d="M4 14h16v15H4z" fill="#8d52a1"/><path d="M23 15h13M23 19h13M23 24h13M23 28h13" stroke="#777" stroke-width="2"/></svg>Property View</button>
        <button><svg viewBox="0 0 40 40"><path d="M1 1h38v38H1z" fill="#fff" stroke="#777" stroke-width="3"/><path d="M0 0h40v7H0z" fill="#4ea27c"/><path d="M11 13v18l19-9z" fill="none" stroke="#3e7ab8" stroke-width="2"/></svg>Estimation View</button>
        <button><svg viewBox="0 0 40 40"><path d="M1 1h38v38H1z" fill="#fff" stroke="#777" stroke-width="3"/><path d="M0 0h40v7H0z" fill="#3e7ab8"/><path d="M12 13h16v17H12z" fill="none" stroke="#3e7ab8" stroke-width="2"/><path d="M15 18h7" stroke="#aaa" stroke-width="4"/></svg>Room View</button>
        <button><svg viewBox="0 0 40 40"><path d="M1 1h38v38H1z" fill="#fff" stroke="#777" stroke-width="3"/><path d="M0 0h40v7H0z" fill="#eab561"/><path d="M8 11h24v21H8z" fill="none" stroke="#777"/><path d="M8 30h12" stroke="#55a0c0" stroke-width="4"/></svg>Tab View</button>
      </nav>
    </aside>
  </main>
</div>
</body>
</html>
```
FILE: styles.css
```css
* { box-sizing: border-box; }
html, body { height: 100%; }
body {
  margin: 0;
  padding: 0 0 12px 12px;
  font: 20px/24px "Open Sans", "Noto Sans", sans-serif;
  color: #000;
  background: linear-gradient(90deg, #251d30, #2b1150 25%, #35104f 42%, #49101c 80%, #241a1c);
  overflow: hidden;
  position: relative;
}
body::before { content: ""; position: absolute; left: 0; top: 0; width: 12px; bottom: 0; background: linear-gradient(#000, #000 55%, #2a0030 90%, #25002c); }
button, input, select { font: inherit; color: inherit; margin: 0; padding: 0; border: 0; background: none; border-radius: 0; }
h1, h2, h3, h4, ul { margin: 0; padding: 0; font: inherit; list-style: none; }
.defs { position: absolute; width: 0; height: 0; }
svg { flex: none; display: block; }
a { color: inherit; text-decoration: none; }

.app { height: 100%; display: flex; flex-direction: column; background: #f4f4f4; position: relative; }

/* title and tabs */
.titlebar { display: flex; align-items: center; height: 40px; padding-left: 2px; }
.logo { width: 36px; height: 36px; margin-right: 8px; }
.logo-m { font: bold 18px "Open Sans", sans-serif; fill: #fff; }
.logo-2 { font: 9px "Open Sans", sans-serif; fill: #fff; }
.titlebar h1 { flex: 1; padding-top: 2px; }
.winbtns { display: flex; }
.winbtns button { width: 84px; height: 40px; display: grid; place-items: center; }
.winbtns svg { width: 20px; height: 20px; }
.tabs { display: flex; height: 43px; align-items: stretch; padding-right: 2px; }
.file { width: 98px; height: 40px; margin-right: 3px; color: #fff; display: flex; align-items: center; justify-content: center; gap: 14px; border: 1px solid #4b9ad6; border-radius: 0 4px 0 0; background: linear-gradient(#a9cfee, #82bae6 50%, #4d9fdb 51%, #7fc0ee); }
.file svg { width: 12px; height: 10px; }
.tab { padding: 4px 20px 0; border: 2px solid transparent; border-bottom: 0; }
.tab.active { background: #fff; border-color: #dcdcdc; margin-top: 2px; padding: 2px 18px 0; margin-bottom: -2px; position: relative; z-index: 1; }

/* ribbon */
.ribbon { display: flex; height: 158px; flex: none; border: 2px solid #dcdcdc; border-left: 0; background: linear-gradient(#fff, #fafafa 60%, #f8f8f8); padding-left: 2px; margin-top: -2px; }
.group { flex: none; display: flex; flex-direction: column; position: relative; padding-top: 7px; }
.group::after { content: ""; position: absolute; right: 0; top: 12px; bottom: 12px; width: 2px; background: #dadada; }
.group h2 { color: #9b9b9b; text-align: center; line-height: 28px; padding-left: 2px; }
.tools { display: flex; height: 118px; flex: none; }
.g-import { width: 245px; } .g-import .tools { padding-left: 8px; } .g-import .big { width: 78px; }
.g-room { width: 315px; } .g-room .tools, .g-markup .tools { padding-left: 4px; }
.g-shape { width: 389px; } .g-shape .tools { padding-left: 12px; } .g-shape .big { width: 70px; } .g-shape .col { width: 148px; }
.g-markup { width: 278px; }
.g-est { width: 339px; } .g-est .tools { padding-left: 8px; } .g-est .big { width: 88px; }
.g-layout { width: 366px; } .g-layout .tools { padding-left: 8px; } .g-layout .big { width: 91px; }
.g-zoom { width: 182px; } .g-zoom .tools { padding-left: 4px; }
.g-view { width: 231px; } .g-view .tools { padding-left: 6px; }
.g-edit { width: 424px; } .g-edit .tools { padding-left: 4px; } .g-edit .big { width: 78px; }
.g-sedit { width: 357px; } .g-sedit .tools { padding-left: 6px; }
.big { width: 76px; display: flex; flex-direction: column; align-items: center; padding-top: 4px; white-space: nowrap; }
.big svg { width: 56px; height: 56px; margin-bottom: 6px; }
.big .dd { margin-top: 6px; }
.big .dd.in { display: inline-block; margin: 0 0 3px 2px; }
.off { color: #a0a0a0; }
.off .dd { border-top-color: #000; }
.blue svg { color: #3e7ab8; }
.grey svg { color: #cfcfcf; }
.dd { flex: none; width: 0; height: 0; border: 5px solid transparent; border-top: 6px solid #000; border-bottom: 0; }
.col { padding-left: 6px; display: flex; flex-direction: column; flex: none; }
.col.tight { padding-left: 0; }
.col.c112 { width: 112px; }
.small { display: flex; align-items: center; height: 38px; padding: 0 6px; gap: 4px; white-space: nowrap; }
.small svg { width: 28px; height: 28px; }
.small .dd { margin-left: 4px; }
.small.wide .dd { margin-left: 14px; }
.stamp2 { font: bold 20px "Open Sans", sans-serif; fill: #fff; }

/* boxes that open a list */
.xb { flex: none; width: 28px; height: 30px; border: 2px solid #9c9bab; border-radius: 5px; box-shadow: inset 0 0 0 2px #fff; background: linear-gradient(#f3f3f7, #c9c9d8); display: grid; place-items: center; }
.xb svg { width: 16px; height: 12px; }
.up svg { transform: rotate(180deg); }
.lt svg { transform: rotate(90deg); }
.rt svg { transform: rotate(-90deg); }
select { appearance: none; width: 100%; height: 100%; min-width: 0; outline: 0; }
.xcombo { display: flex; align-items: center; background: #fff; border: 2px solid #a9aeb8; padding: 0 2px 0 6px; min-width: 0; }
.zoomsel { width: 97px; height: 38px; margin-left: 1px; }
.thin { width: 12px; height: 10px; }
.combo { display: flex; align-items: center; position: relative; background: #fff; border: 2px solid #abadb3; padding: 0 10px 0 7px; }
.combo .thin { margin-top: -4px; }
.combo.grey { background: linear-gradient(#f1f1f1, #e4e4e4); }
.combo.hot { background: linear-gradient(#ebf4fc, #d9e9f8); border-color: #7eb4ea; }
.pname select { margin-right: 12px; }

/* estimate box */
.stack { margin-left: 9px; width: 224px; padding-top: 1px; }
.tilepick { display: flex; align-items: center; width: 100%; height: 41px; border: 2px solid #acacac; background: linear-gradient(#f2f2f2, #e4e4e4); padding: 0 9px; gap: 3px; white-space: nowrap; }
.tilepick span { flex: 1; text-align: left; overflow: hidden; width: 0; margin-right: 3px; }
.sw { width: 28px; height: 28px; }
.red { color: #ff4500; } .aqua { color: #afeeee; } .ivory { color: #fffff0; } .lav { color: #e6e6fa; } .cream { color: #ffebcd; }
.runbox { margin-top: 5px; height: 52px; border: 2px solid #e0e0e0; border-radius: 4px; display: flex; align-items: center; padding-left: 7px; }
.runbox > button { width: 49px; flex: none; }
.runbox > button svg { width: 36px; height: 36px; }
.runbox > .dd { margin-left: 9px; }
.settings { position: relative; width: 50px; height: 50px; flex: none; margin-left: -7px; }
.gearbtn { width: 49px; height: 50px; border: 2px solid #4a4a72; background: linear-gradient(#fdbd6b, #ffa45a); color: #5d7f9f; display: grid; place-items: center; }
.gearbtn svg { width: 38px; height: 38px; }
.popup { position: absolute; z-index: 5; left: 0; top: 49px; width: 456px; border: 2px solid #484a4c; background: #f0f0f0; padding: 0 3px; }
.prow { display: grid; grid-template-columns: 192px 254px; align-items: center; height: 46px; white-space: nowrap; }
.prow .combo { height: 38px; }
.check { display: flex; align-items: center; gap: 4px; height: 34px; }
input[type=checkbox] { appearance: none; flex: none; width: 23px; height: 23px; border: 2px solid #1c5180; background: linear-gradient(135deg, #dcdcdc, #fff); display: grid; place-items: center; }
input[type=checkbox]:checked::after { content: ""; width: 7px; height: 12px; border: solid #21a121; border-width: 0 3px 3px 0; transform: rotate(40deg); margin-top: -3px; }
.list { position: absolute; z-index: 6; left: -2px; right: -2px; top: 36px; height: 98px; background: #fff; border: 2px solid #6b6b6b; padding: 1px 2px 0; box-shadow: 4px 4px 4px rgba(0,0,0,.5); }
.list li { height: 31px; line-height: 31px; padding-left: 4px; }
.list .sel { background: #0078d7; color: #fff; }
.frame { position: absolute; z-index: 8; border: 5px solid #f23c3c; border-radius: 6px; box-shadow: 0 1px 2px rgba(0,0,0,.5); }
.f1 { left: -5px; top: -7px; width: 61px; height: 63px; }
.f2 { left: -4px; top: 379px; width: 463px; height: 54px; }
.marker { position: absolute; z-index: 8; filter: drop-shadow(0 1px 1px rgba(0,0,0,.4)); }
.marker text { font: 38px "Open Sans", sans-serif; fill: #fff; stroke: #fff; text-anchor: middle; }
.m1 { left: -90px; top: 15px; width: 80px; height: 60px; }
.m2 { left: -104px; top: 328px; width: 92px; height: 60px; }
.cursor { position: absolute; z-index: 9; left: 434px; top: 407px; width: 20px; height: 26px; }

/* quick access bar */
.quick { display: flex; align-items: center; height: 64px; flex: none; padding-left: 12px; border-bottom: 2px solid #dadada; }
.quick button { width: 67px; height: 56px; display: grid; place-items: center; }
.quick .help { margin-left: 2px; }
.quick svg { width: 54px; height: 54px; }
.quick .dd + button { margin-left: 4px; }

/* panels */
.work { flex: 1; min-height: 0; display: grid; grid-template-columns: 1246px 1fr 449px; padding-top: 1px; }
.phead { display: flex; align-items: center; height: 43px; flex: none; padding: 0 12px 0 6px; background: linear-gradient(90deg, #f2f2f2, #fff 50%, #f2f2f2); border: 1px solid #c8cad2; gap: 22px; }
.phead h3 { flex: 1; }
.hi { width: 14px; height: 14px; }
.left { display: flex; flex-direction: column; min-width: 0; min-height: 0; border-left: 2px solid #c8c8cc; background: #fff; }
.catalog { display: flex; align-items: center; height: 42px; gap: 8px; padding-right: 8px; flex: none; }
.catalog .xcombo { flex: 1; height: 42px; padding: 0 1px 0 4px; }
.ib svg { width: 28px; height: 28px; }
.tbar { display: flex; align-items: center; height: 37px; flex: none; padding: 0 6px 0 5px; }
.tbar .ib + .ib { margin-left: 10px; }
.tbar .tx { width: 27px; }
.tbar .ib + .tx { margin-left: 7px; }
.tbar input { flex: 1; min-width: 0; height: 35px; border: 2px solid #acadb3; margin: 0 8px 0 2px; padding-bottom: 5px; line-height: 24px; }
.tbar input::placeholder { color: #aaa; opacity: 1; }
.warn { display: flex; align-items: center; gap: 9px; margin-right: 1px; }
.warn .dd { border-width: 8px 7px 0; }
.treebox { height: 390px; flex: none; display: flex; border: 2px solid #a9aeb8; border-bottom: 0; overflow: hidden; padding-right: 1px; }
.tree { flex: 1; overflow: hidden; padding: 3px 0 0 89px; }
.tree li { display: flex; align-items: center; gap: 1px; height: 32px; }
.tree li:nth-child(even) { height: 31px; }
.vsb { width: 30px; flex: none; display: flex; flex-direction: column; align-items: center; background: linear-gradient(90deg, #f1f0ea, #fff); padding-top: 1px; }
.track { flex: 1; width: 100%; display: flex; justify-content: center; }
.thumb { display: block; width: 28px; border: 2px solid #9c9bab; border-radius: 5px; box-shadow: inset 0 0 0 2px #fff; background: repeating-linear-gradient(#8b8ca0 0 1px, transparent 1px 4px) center / 10px 13px no-repeat, linear-gradient(90deg, #f1f1f5, #c9c9d8); }
.t-tree .thumb { margin-top: 128px; height: 85px; }
.t-plan .thumb { margin-top: 418px; height: 31px; }
.t-prop { padding: 30px 0 2px; }
.hsplit { height: 6px; background: #d0d0d0; flex: none; }
.tablebox { flex: 1; min-height: 0; display: flex; flex-direction: column; border: 2px solid #8b8d98; padding: 4px 2px 1px; }
table { border-collapse: collapse; table-layout: fixed; width: 100%; white-space: nowrap; }
.c1 { width: 364px; } .c2 { width: 131px; } .c3 { width: 79px; } .c4 { width: 105px; }
th { font-weight: 400; height: 34px; padding: 0; border-right: 2px solid #dcdcdc; border-bottom: 2px solid #dcdcdc; background: linear-gradient(#fff, #f6f6f6); }
th.r { text-align: right; padding-right: 8px; border-right: 0; }
td { height: 37px; padding: 0 8px 0 15px; overflow: hidden; }
td:first-child { padding: 0 6px 0 8px; }
.cell { display: flex; align-items: center; overflow: hidden; gap: 2px; }
.clip { overflow: hidden; min-width: 0; }
.l1 { padding-left: 50px; } .l2 { padding-left: 28px; }
.tall td { height: 65px; }
.dim { color: #7d7d7d; }
.selrow { color: #fff; background: linear-gradient(#cacaca, #c4c4c4 50%, #b1b1b1 51%, #b4b4b4); }
.ex { width: 16px; height: 16px; flex: none; border: 1px solid #7a9ab8; border-radius: 2px; background: #f4f1ea; font: bold 14px/13px "DejaVu Sans", sans-serif; color: #222; text-align: center; margin-right: 5px; }
.fold { width: 28px; height: 24px; margin-right: 7px; }
.pat { width: 56px; height: 56px; }
.hsb { margin-top: auto; display: flex; align-items: center; height: 30px; background: linear-gradient(#f1f0ea, #fff); }
.hsb .thumb { height: 30px; width: 100%; margin: 0 32px 0 1px; background: repeating-linear-gradient(90deg, #8b8ca0 0 1px, transparent 1px 4px) center / 13px 10px no-repeat, linear-gradient(#f1f1f5, #c9c9d8); }
.grip { height: 10px; flex: none; font: 8px/8px "DejaVu Sans", sans-serif; text-align: center; color: #333; background: #f4f4f4; border-bottom: 2px solid #c8cad2; }
.footicons { display: flex; justify-content: flex-end; height: 49px; flex: none; background: #f4f4f4; }
.footicons button { width: 56px; display: grid; place-items: center; }
.on { background: #f0ffff; }
.footicons svg { width: 40px; height: 40px; }

/* drawing area */
.center { display: flex; flex-direction: column; min-width: 0; min-height: 0; border-left: 6px solid #d0d0d3; border-right: 6px solid #d0d0d3; background: #fff; }
.stage { flex: 1; min-height: 0; display: flex; }
.plan { flex: 1; position: relative; overflow: hidden; min-width: 0; }
.planart { position: absolute; width: 100%; height: 100%; }
.dims text { font: 28px "DejaVu Sans", sans-serif; text-anchor: middle; }
.chat { position: absolute; right: 57px; bottom: 56px; width: 56px; height: 56px; border: 2px solid #8fd0f8; border-radius: 50%; background: #fff; display: grid; place-items: center; }
.chat svg { width: 28px; height: 26px; }
.floorbar { display: flex; align-items: center; height: 31px; flex: none; }
.tri { width: 0; height: 0; border: 6px solid transparent; flex: none; }
.tri.up { border-top: 0; border-bottom: 7px solid #000; margin: 0 14px 0 8px; }
.tri.left { border-left: 0; border-right: 7px solid #000; margin: 0 0 0 13px; }
.tri.right { border-right: 0; border-left: 7px solid #000; margin-right: 5px; }
.floorbar .ib svg { width: 22px; height: 22px; }
.floor { font-weight: 700; color: #00008b; padding: 7px 12px 0 24px; line-height: 24px; border-right: 2px solid #bbb; }
.sp { flex: 1; }
.mini { display: flex; width: 268px; border: solid #d0d0d0; border-width: 0 5px; }
.mini .xb { height: 29px; }
.track.m { justify-content: flex-start; }
.mini .thumb { width: 14px; height: 29px; margin-left: 82px; background: #e6e6ee; }
input[type=range] { appearance: none; width: 246px; height: 31px; margin: 0 9px; }
input[type=range]::-webkit-slider-runnable-track { height: 5px; background: #eee9df; border-top: 2px solid #b5b5b5; }
input[type=range]::-webkit-slider-thumb { appearance: none; width: 18px; height: 31px; margin-top: -14px; border: 2px solid #9c9bab; background: linear-gradient(#5cc85c 5px, #c9c9d8 5px); }
.status { display: flex; align-items: center; justify-content: space-between; height: 35px; flex: none; background: #f4f4f4; padding: 0 4px 0 3px; }
.status svg { width: 52px; height: 22px; }

/* property panel */
.right { display: flex; flex-direction: column; min-width: 0; min-height: 0; padding-right: 2px; }
.right .phead { padding-left: 8px; }
.propbox { flex: 1; min-height: 0; background: #dcdcdc; border: 2px solid #b0b3bb; }
h4 { font-weight: 700; height: 38px; line-height: 38px; padding-left: 12px; }
.props { display: flex; background: #fff; }
.gutter { width: 17px; background: #f0f0f0; }
.ptable { flex: 1; min-width: 0; }
.pr { display: grid; grid-template-columns: 1fr 134px; height: 40px; border-bottom: 2px solid #eee; white-space: nowrap; }
.pr > :first-child { padding-left: 56px; display: flex; align-items: center; border-right: 2px solid #eee; min-width: 0; }
.pr > :last-child { display: flex; align-items: center; min-width: 0; }
.pr.head { border-bottom: 0; }
.pr.head > :first-child { padding-left: 10px; gap: 10px; }
.pr > .v { padding-left: 9px; }
.pr.h31 { height: 31px; } .pr.h48 { height: 48px; } .pr.h37 { height: 37px; }
.open { width: 10px; height: 10px; background: #111; clip-path: polygon(100% 0, 100% 100%, 0 100%); }
.gtri { border: solid transparent; border-width: 14px 8px 0; border-top-color: #808080; margin-left: 9px; }
#pid { width: 87px; height: 46px; border: 2px solid #b5b5b5; padding-left: 4px; }
.copy { width: 43px; height: 44px; margin-left: 2px; border: 2px solid #1c5180; border-radius: 6px; background: linear-gradient(#f3f3f7, #c9c9d8); display: grid; place-items: center; }
.copy svg { width: 28px; height: 28px; }
.plain[type=checkbox] { margin-left: 10px; width: 25px; border-color: #777; background: #fff; }
.pr .xcombo .xb { margin-left: 1px; }
#p9 { margin-left: 9px; }
.pct { width: 96px; height: 32px; margin-left: 4px; border: 2px solid #ccc; padding-left: 4px; color: #777; }
.props .vsb { margin-left: 1px; padding: 1px 0 1px; }
.views { height: 245px; flex: none; display: flex; flex-direction: column; }
.views button { display: flex; align-items: center; gap: 16px; padding-left: 9px; height: 49px; font-weight: 700; border-bottom: 2px solid #c8cad2; }
.views svg { width: 40px; height: 40px; }
```
